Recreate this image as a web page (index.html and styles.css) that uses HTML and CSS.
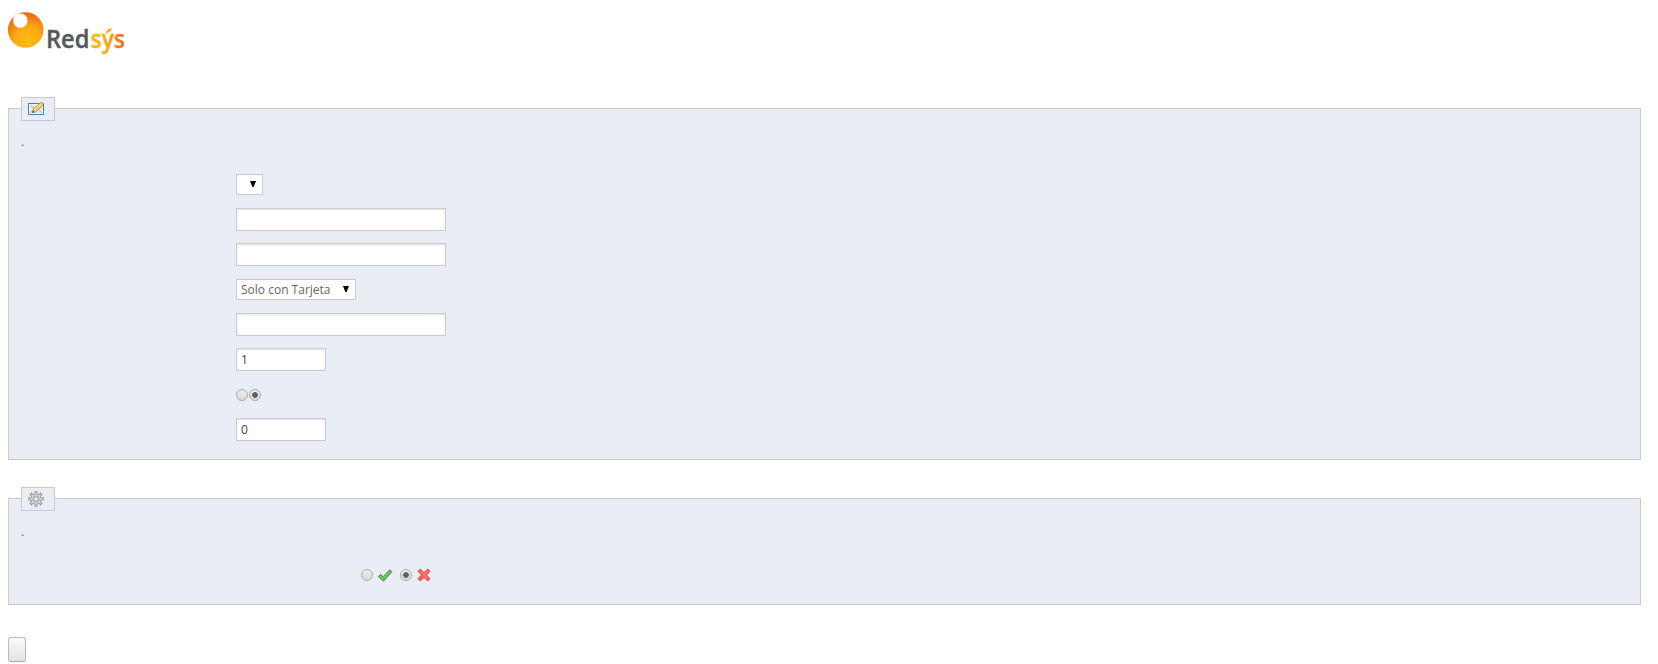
FILE: index.html
```
<!DOCTYPE html>
<html lang="es">
<head>
    <meta charset="UTF-8">
    <title>Redsýs</title>
    <link rel="stylesheet" href="styles.css">
</head>
<body>
    <svg class="logo" width="124" height="56" viewBox="8 10 124 56">
        <defs>
            <radialGradient id="ball" gradientUnits="userSpaceOnUse" cx="28" cy="40" r="29">
                <stop offset="0" stop-color="#fdbb12"/>
                <stop offset="0.45" stop-color="#fcab15"/>
                <stop offset="1" stop-color="#ee5a10"/>
            </radialGradient>
            <linearGradient id="word" gradientUnits="userSpaceOnUse" x1="90" y1="0" x2="125" y2="0">
                <stop offset="0" stop-color="#fdbb14"/>
                <stop offset="0.5" stop-color="#fba61a"/>
                <stop offset="1" stop-color="#f2661a"/>
            </linearGradient>
        </defs>
        <circle cx="25.7" cy="30" r="17.8" fill="url(#ball)"/>
        <circle cx="20.3" cy="20.7" r="7.2" fill="#fff"/>
        <text class="logo-text" x="46" y="48" textLength="43.5" lengthAdjust="spacingAndGlyphs" fill="#55595e" stroke="#55595e">Red</text>
        <text class="logo-text" x="90.5" y="48" textLength="34.5" lengthAdjust="spacingAndGlyphs" fill="url(#word)" stroke="url(#word)">sýs</text>
    </svg>

    <form>
        <div class="fieldset">
            <div class="legend">
                <svg width="16" height="16" viewBox="0 0 16 16">
                    <rect x="0.5" y="2.5" width="15" height="11" fill="#fff" stroke="#4b79b5"/>
                    <rect x="1.5" y="3.5" width="13" height="9" fill="#dceaf9" stroke="#fff"/>
                    <path d="M2 4l6 5 6-5M2 12l4-4M14 12l-4-4" fill="none" stroke="#9dbde3"/>
                    <path d="M4.5 11.5l1-3.5 7-6.5 2.7 2.5-7.2 6.7z" fill="#f7cf58" stroke="#b98529" stroke-width="0.8"/>
                    <path d="M6.5 8.7l6.7-6" stroke="#fff0a8"/>
                    <path d="M12.2 1.5l1.3-1 2 2-1 1.5z" fill="#e9a56f"/>
                    <path d="M4.2 11.8l.6-2 1.5 1.4z" fill="#333"/>
                </svg>
            </div>
            <p class="desc">.</p>
            <div class="rows">
                <div class="row">
                    <span class="select small">
                        <select><option></option></select>
                        <svg class="arrow" width="6" height="6" viewBox="0 0 6 6"><path d="M0 0h6L3.6 6H2.4z"/></svg>
                    </span>
                </div>
                <div class="row"><input type="text" class="text"></div>
                <div class="row"><input type="text" class="text"></div>
                <div class="row">
                    <span class="select">
                        <select><option>Solo con Tarjeta</option></select>
                        <svg class="arrow" width="6" height="6" viewBox="0 0 6 6"><path d="M0 0h6L3.6 6H2.4z"/></svg>
                    </span>
                </div>
                <div class="row"><input type="text" class="text"></div>
                <div class="row"><input type="text" class="text short" value="1"></div>
                <div class="row">
                    <input type="radio" name="error" class="radio">
                    <input type="radio" name="error" class="radio" checked>
                </div>
                <div class="row"><input type="text" class="text short" value="0"></div>
            </div>
        </div>

        <div class="fieldset options">
            <div class="legend">
                <svg width="16" height="16" viewBox="0 0 16 16">
                    <!-- teeth, body, hole -->
                    <g stroke="#858585" stroke-width="2.8">
                        <path d="M8 .2v15.6M.2 8h15.6M2.5 2.5l11 11M13.5 2.5l-11 11"/>
                    </g>
                    <circle cx="8" cy="8" r="5.2" fill="#d6d6d6" stroke="#8c8c8c" stroke-width="0.8"/>
                    <g stroke="#dadada" stroke-width="1.3">
                        <path d="M8 1v14M1 8h14M3.1 3.1l9.8 9.8M12.9 3.1l-9.8 9.8"/>
                    </g>
                    <circle cx="8" cy="8" r="3.2" fill="none" stroke="#b0b0b0"/>
                    <circle cx="8" cy="8" r="2.1" fill="#f6f7fa" stroke="#8e8e8e" stroke-width="0.7"/>
                </svg>
            </div>
            <p class="desc">.</p>
            <div class="choice">
                <input type="radio" name="retry" class="radio">
                <svg class="yes" width="16" height="16" viewBox="0 0 16 16">
                    <path d="M1.3 9.5l2.2-2.2 2.7 2.4 6.6-6.9 2 1.9-8.3 9.5z" fill="#66bb63" stroke="#3c8c3b"/>
                    <path d="M3 9.2l3.2 2.6 7-7.6" fill="none" stroke="#8fd48a" stroke-width="0.8"/>
                </svg>
                <input type="radio" name="retry" class="radio" checked>
                <svg class="no" width="16" height="16" viewBox="0 0 16 16">
                    <path d="M4.3 2L8 5.7 11.7 2 14 4.3 10.5 8l3.5 3.7-2.3 2.3L8 10.4 4.3 14 2 11.700 5.500 8 2 4.300z" fill="#f8605f" stroke="#e04a4c"/>
                    <path d="M4.2 4.2l7.6 7.6M11.8 4.2L8 8" stroke="#ff9490" stroke-width="0.8"/>
                </svg>
            </div>
        </div>

        <button type="button" class="button"></button>
    </form>
</body>
</html>
```
FILE: styles.css
```
* {
    box-sizing: border-box;
}

body {
    margin: 0;
    padding: 10px 17px 0 8px;
    background: #fff;
    font-family: "Open Sans", sans-serif;
    font-size: 12px;
    color: #585a69;
    overflow: hidden;
}

.logo {
    display: block;
    margin-bottom: 42px;
}

.logo-text {
    font-size: 25px;
    font-weight: 600;
    stroke-width: 0.4px;
}

.fieldset {
    height: 352px;
    padding: 0 12px;
    border: 1px solid #c8cacf;
    background: #eaedf4;
}

.options {
    height: 107px;
    margin-top: 38px;
}

.legend {
    display: flex;
    align-items: center;
    width: 34px;
    height: 24px;
    margin-top: -12px;
    padding-left: 6px;
    border: 1px solid #c8cacf;
    background: #eaedf4;
}

.desc {
    height: 18px;
    margin: 12px 0 0;
    line-height: 18px;
}

.rows {
    padding: 16px 0 0 215px;
}

.row {
    display: flex;
    align-items: center;
    gap: 1px;
    height: 35px;
}

.text {
    width: 210px;
    height: 23px;
    margin: 0;
    padding: 0 4px;
    border: 1px solid #c8cacf;
    background: #fff;
    box-shadow: inset 0 1px 2px rgba(0, 0, 0, 0.12);
    font-family: "Open Sans", sans-serif;
    font-size: 12px;
    color: #444;
}

.short {
    width: 90px;
}

.select {
    position: relative;
    width: 120px;
    height: 21px;
}

.select select {
    display: block;
    width: 100%;
    height: 21px;
    padding: 0 4px;
    border: 1px solid #c8cacf;
    border-radius: 0;
    background: #fff;
    font-family: "Open Sans", sans-serif;
    font-size: 12px;
    color: #666;
    appearance: none;
}

.small {
    width: 27px;
}

.arrow {
    position: absolute;
    top: 7px;
    right: 7px;
}

.radio {
    width: 12px;
    height: 12px;
    margin: 0;
    border: 1px solid #a9a9a9;
    border-radius: 50%;
    background: linear-gradient(#eee, #d9d9d9);
    appearance: none;
}

.radio:checked {
    background: radial-gradient(circle, #606060 0 2.5px, transparent 3.2px), linear-gradient(#eee, #dcdcdc);
}

.choice {
    display: flex;
    align-items: center;
    height: 16px;
    margin-top: 26px;
    padding-left: 340px;
}

.yes {
    margin: 0 7px 0 4px;
}

.no {
    margin-left: 4px;
}

.button {
    display: block;
    width: 18px;
    height: 25px;
    margin-top: 32px;
    padding: 0;
    border: 1px solid #bbb;
    border-bottom-color: #aaa;
    border-radius: 3px;
    background: linear-gradient(#f9f9f9, #e3e3e3);
}
```
